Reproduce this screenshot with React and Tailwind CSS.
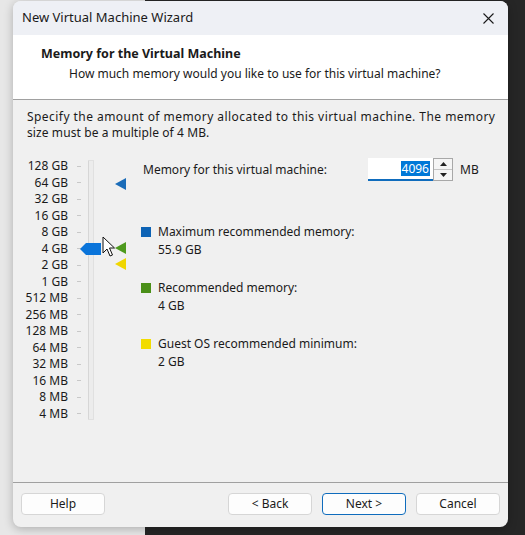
import React from 'react';

const FONT = { fontFamily: '"Segoe UI", "Noto Sans", "Liberation Sans", sans-serif' };

const SIZES = ['128 GB', '64 GB', '32 GB', '16 GB', '8 GB', '4 GB', '2 GB', '1 GB', '512 MB', '256 MB', '128 MB', '64 MB', '32 MB', '16 MB', '8 MB', '4 MB'];

const Marker = ({ color, top }) => (
    <svg className="absolute left-[88px]" style={{ top }} width="11" height="12" viewBox="0 0 11 12">
        <polygon points="0,6 11,0 11,12" fill={color} />
    </svg>
);

const Slider = () => (
    <div className="relative flex shrink-0">
        {/* labels */}
        <div className="w-[41px] flex flex-col items-end text-[12px] text-[#1a1a1a]">
            {SIZES.map((s) => (
                <div key={s} className="h-[16.5px] leading-[16.5px] whitespace-nowrap">{s}</div>
            ))}
        </div>
        {/* ticks */}
        <div className="w-[20px] flex flex-col pl-[9px]">
            {SIZES.map((s) => (
                <div key={s} className="h-[16.5px] flex items-center">
                    <div className="w-[4px] h-px bg-[#c8c8c8]" />
                </div>
            ))}
        </div>
        {/* track */}
        <div className="w-[6px] mt-[2px] mb-[2px] border border-[#e0e0e0] border-l-[#d6d6d6] bg-[#ececec] rounded-[1px]" />
        {/* thumb */}
        <svg className="absolute left-[53px] top-[85px]" width="21" height="12" viewBox="0 0 21 12">
            <polygon points="0,6 6,0 21,0 21,12 6,12" fill="#0a74da" />
        </svg>
        {/* cursor */}
        <svg className="absolute left-[75px] top-[78px]" width="13" height="22" viewBox="0 0 13 22">
            <path d="M1 1 L1 17 L5 13 L8 20 L10.5 19 L7.5 12 L12.5 12 Z" fill="#fff" stroke="#111" strokeWidth="1" strokeLinejoin="round" />
        </svg>
        {/* recommendation markers */}
        <Marker color="#1b6cb8" top={20} />
        <Marker color="#4e9a1e" top={84} />
        <Marker color="#f0d600" top={100} />
    </div>
);

const Legend = ({ color, label, value }) => (
    <div className="flex flex-col">
        <div className="flex items-center gap-[7px]">
            <div className="w-[10px] h-[10px]" style={{ background: color }} />
            <span>{label}</span>
        </div>
        <div className="pl-[17px] mt-[1px]">{value}</div>
    </div>
);

const Btn = ({ children, primary }) => (
    <button
        type="button"
        className={`w-[84px] h-[22px] rounded-[4px] bg-[#fdfdfd] text-[12px] text-[#1a1a1a] leading-none ${primary ? 'border border-[#0f6cbd]' : 'border border-[#d6d6d6]'}`}
    >
        {children}
    </button>
);

export default function App() {
    return (
        <div className="w-[525px] h-[535px] overflow-hidden bg-[linear-gradient(to_right,#e7e7e7_145px,#262626_145px)] pt-[1px] pl-[13px]" style={FONT}>
            <div className="w-[495px] h-[526px] rounded-[8px] overflow-hidden flex flex-col bg-[#f0f0f0] shadow-[0_2px_10px_rgba(0,0,0,0.25)]">
                {/* title bar */}
                <div className="h-[34px] shrink-0 bg-[#eef0f5] flex items-center justify-between pl-[9px] pr-[14px]">
                    <span className="text-[13px] text-[#1a1a1a]">New Virtual Machine Wizard</span>
                    <svg width="11" height="11" viewBox="0 0 11 11">
                        <path d="M0.5 0.5 L10.5 10.5 M10.5 0.5 L0.5 10.5" stroke="#1a1a1a" strokeWidth="1.1" />
                    </svg>
                </div>

                {/* header */}
                <div className="h-[65px] shrink-0 bg-white border-b border-[#a0a0a0] pt-[10px] pl-[28px] text-[12px] text-[#1a1a1a]">
                    <div className="font-bold text-[12.5px] leading-[17px]">Memory for the Virtual Machine</div>
                    <div className="pl-[28px] mt-[3px] leading-[17px]">How much memory would you like to use for this virtual machine?</div>
                </div>

                {/* body */}
                <div className="flex-1 flex flex-col px-[14px] pt-[9px] text-[12px] text-[#1a1a1a]">
                    <p className="leading-[16px] whitespace-nowrap">
                        <span className="tracking-[0.45px]">Specify the amount of memory allocated to this virtual machine. The memory</span>
                        <br />
                        <span className="tracking-[0.1px]">size must be a multiple of 4 MB.</span>
                    </p>
                    <div className="flex mt-[17px]">
                        <Slider />
                        <div className="flex flex-col pl-[49px]">
                            <div className="flex items-center h-[23px]">
                                <span className="w-[225px]">Memory for this virtual machine:</span>
                                <div className="flex h-[23px]">
                                    <div className="w-[65px] bg-white border-b-2 border-[#0f6cbd] flex items-center justify-end pr-[3px]">
                                        <span className="bg-[#0078d7] text-white px-[1px] leading-[15px]">4096</span>
                                    </div>
                                    <div className="w-[20px] flex flex-col border border-[#a8a8a8] bg-[#f5f5f5]">
                                        <div className="flex-1 flex items-center justify-center border-b border-[#c4c4c4]">
                                            <svg width="7" height="4" viewBox="0 0 7 4"><polygon points="3.5,0 7,4 0,4" fill="#222" /></svg>
                                        </div>
                                        <div className="flex-1 flex items-center justify-center">
                                            <svg width="7" height="4" viewBox="0 0 7 4"><polygon points="0,0 7,0 3.5,4" fill="#222" /></svg>
                                        </div>
                                    </div>
                                </div>
                                <span className="ml-[7px]">MB</span>
                            </div>
                            <div className="flex flex-col gap-[21px] mt-[42px] ml-[-2px] leading-[17px]">
                                <Legend color="#0d63b5" label="Maximum recommended memory:" value="55.9 GB" />
                                <Legend color="#4a8f18" label="Recommended memory:" value="4 GB" />
                                <Legend color="#f2dc00" label="Guest OS recommended minimum:" value="2 GB" />
                            </div>
                        </div>
                    </div>
                </div>

                {/* footer */}
                <div className="h-[45px] shrink-0 border-t border-[#a0a0a0] flex items-start pt-[10px] px-[8px]">
                    <Btn>Help</Btn>
                    <div className="flex-1" />
                    <div className="flex gap-[10px]">
                        <Btn>&lt; Back</Btn>
                        <Btn primary>Next &gt;</Btn>
                        <Btn>Cancel</Btn>
                    </div>
                </div>
            </div>
        </div>
    );
}
